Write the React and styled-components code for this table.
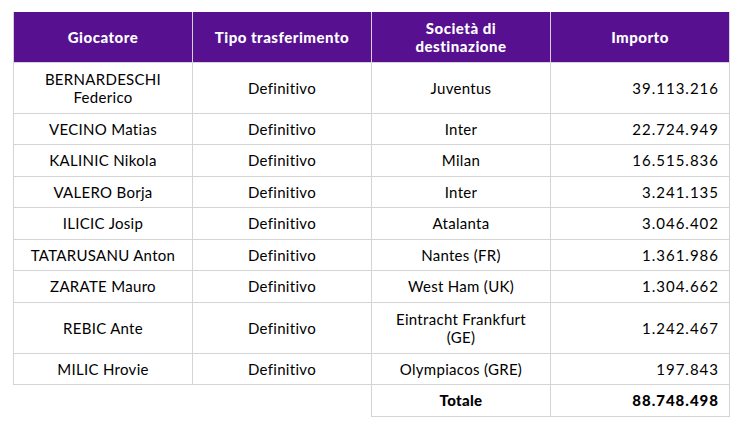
import React from "react"
import styled, { createGlobalStyle } from "styled-components"

const GlobalStyle = createGlobalStyle`
  html, body {
    margin: 0;
    padding: 0;
    background: #ffffff;
  }
  body {
    font-family: "Lato", "Liberation Sans", sans-serif;
    color: #000000;
  }
`

const rows = [
    { player: ["BERNARDESCHI", "Federico"], type: "Definitivo", club: ["Juventus"], amount: "39.113.216" },
    { player: ["VECINO Matias"], type: "Definitivo", club: ["Inter"], amount: "22.724.949" },
    { player: ["KALINIC Nikola"], type: "Definitivo", club: ["Milan"], amount: "16.515.836" },
    { player: ["VALERO Borja"], type: "Definitivo", club: ["Inter"], amount: "3.241.135" },
    { player: ["ILICIC Josip"], type: "Definitivo", club: ["Atalanta"], amount: "3.046.402" },
    { player: ["TATARUSANU Anton"], type: "Definitivo", club: ["Nantes (FR)"], amount: "1.361.986" },
    { player: ["ZARATE Mauro"], type: "Definitivo", club: ["West Ham (UK)"], amount: "1.304.662" },
    { player: ["REBIC Ante"], type: "Definitivo", club: ["Eintracht Frankfurt", "(GE)"], amount: "1.242.467" },
    { player: ["MILIC Hrovie"], type: "Definitivo", club: ["Olympiacos (GRE)"], amount: "197.843" },
]

function Lines({ parts }) {
    return parts.map((p, i) => (
        <React.Fragment key={i}>
            {i > 0 && <br />}
            {p}
        </React.Fragment>
    ))
}

function App() {
    return <Page>
        <GlobalStyle />
        <Table>
            <colgroup>
                <Col />
                <Col />
                <Col />
                <Col />
            </colgroup>
            <thead>
                <tr>
                    <Head>Giocatore</Head>
                    <Head>Tipo trasferimento</Head>
                    <Head>Società di<br />destinazione</Head>
                    <Head>Importo</Head>
                </tr>
            </thead>
            <tbody>
                {rows.map((r, i) => {
                    const tall = r.player.length > 1 || r.club.length > 1
                    return <tr key={i}>
                        <Cell $tall={tall}><Lines parts={r.player} /></Cell>
                        <Cell $tall={tall}>{r.type}</Cell>
                        <Cell $tall={tall}><Lines parts={r.club} /></Cell>
                        <Cell $tall={tall} $right>{r.amount}</Cell>
                    </tr>
                })}
                <tr>
                    <Blank />
                    <Blank />
                    <Cell $bold>Totale</Cell>
                    <Cell $bold $right>88.748.498</Cell>
                </tr>
            </tbody>
        </Table>
    </Page>
}

const Page = styled.div`
    padding: 12px 0 0 13px;
`

const Table = styled.table`
    border-collapse: collapse;
    table-layout: fixed;
    width: 716px;
`

const Col = styled.col`
    width: 179px;
`

const Head = styled.th`
    background-color: #561090;
    color: #ffffff;
    font-weight: 900;
    font-size: 15px;
    letter-spacing: 0.5px;
    line-height: 18px;
    height: 50px;
    padding: 0 8px;
    box-sizing: border-box;
    text-align: center;
    vertical-align: middle;
    border: 1px solid #d6d0dc;
    border-top: none;
`

const Cell = styled.td`
    height: ${props => props.$tall ? "51px" : "31.5px"};
    box-sizing: border-box;
    padding: 0 ${props => props.$right ? "10px" : "6px"} 0 6px;
    border: 1px solid #d4d4d4;
    font-size: 15px;
    letter-spacing: ${props => props.$right ? "1px" : "0.3px"};
    line-height: 18px;
    font-weight: ${props => props.$bold ? 900 : 400};
    text-align: ${props => props.$right ? "right" : "center"};
    vertical-align: middle;
`

const Blank = styled.td`
    border: none;
    border-top: 1px solid #d4d4d4;
`

export default App
